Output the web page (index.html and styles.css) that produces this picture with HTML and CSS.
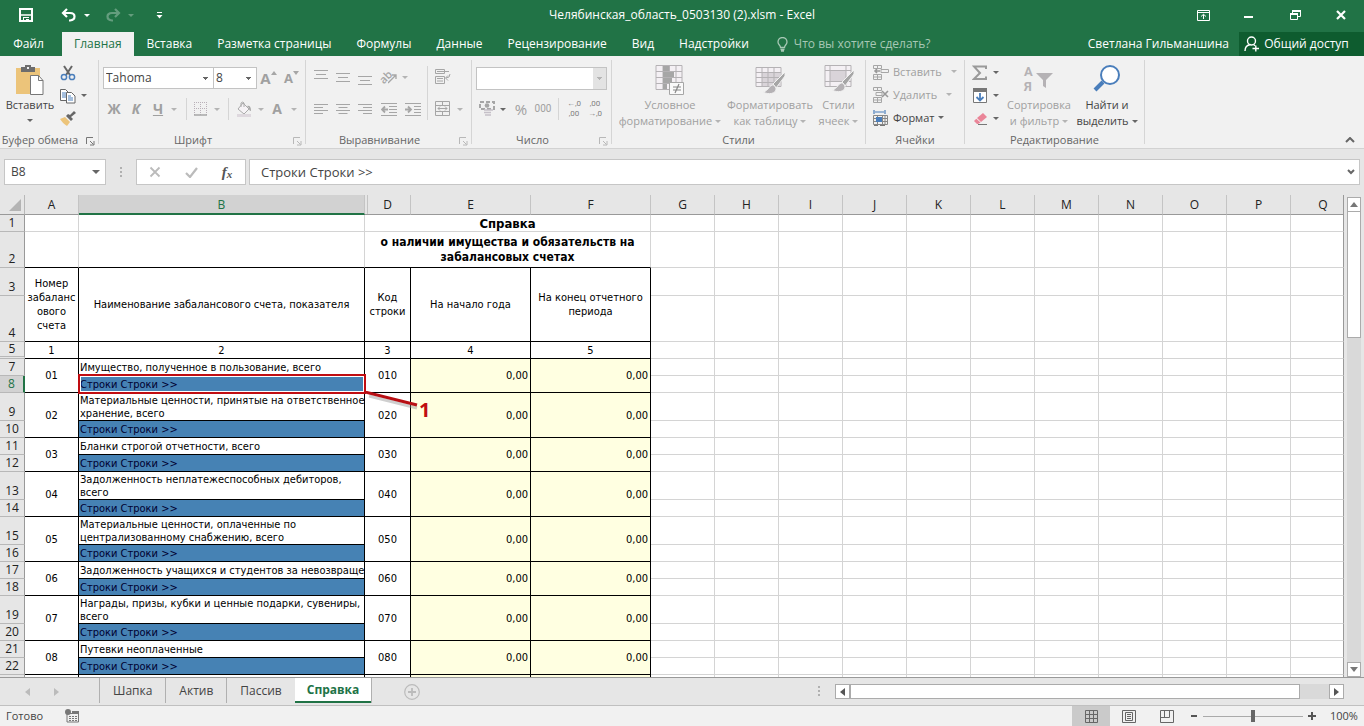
FILE: index.html
```html
<!DOCTYPE html>
<html lang="ru">
<head>
<meta charset="utf-8">
<title>Челябинская_область_0503130 (2).xlsm - Excel</title>
<link rel="stylesheet" href="styles.css">
</head>
<body>
<header class="titlebar">
  <div class="quick">
    <button class="save" aria-label="Сохранить"><svg width="14" height="14" viewBox="0 0 14 14"><path d="M1 1h12v12H1z" fill="none" stroke="#fff" stroke-width="2"/><path d="M2 7h10" stroke="#fff" stroke-width="1.500"/><path d="M4 9h6v1H4zM4 10h1v3H4zM7 11h3v2H7z" fill="#fff"/></svg></button>
    <button class="step" aria-label="Отменить"><svg width="16" height="14" viewBox="0 0 16 14"><path d="M6 1L2 5l4 4M2 5h7c6 0 6 7 0 7.500H8" fill="none" stroke="#fff" stroke-width="2.200"/></svg></button>
    <button class="drop" aria-label="Список отмены"><i class="arr white"></i></button>
    <button class="step faded" aria-label="Вернуть"><svg width="16" height="14" viewBox="0 0 16 14"><path d="M10 1l4 4-4 4M14 5H7C1 5 1 12 7 12.500h1" fill="none" stroke="#fff" stroke-width="2.200"/></svg></button>
    <button class="drop faded" aria-label="Список возврата"><i class="arr white"></i></button>
    <button class="custom" aria-label="Настройка панели"><svg width="7" height="7" viewBox="0 0 7 7"><path d="M1 0h5v1H1zM.5 3h6l-3 3.500z" fill="#fff"/></svg></button>
  </div>
  <div class="doc-title">Челябинская_область_0503130 (2).xlsm - Excel</div>
  <div class="window-buttons">
    <button aria-label="Параметры ленты"><svg width="13" height="11" viewBox="0 0 13 11"><path d="M.5.5h12v10H.5zM.5 2.500h12M6.500 9V4.500M4 6.500l2.500-2.200L9 6.500" fill="none" stroke="#fff"/></svg></button>
    <button aria-label="Свернуть"><svg width="10" height="11" viewBox="0 0 10 11"><path d="M0 6h9v2H0z" fill="#fff"/></svg></button>
    <button aria-label="Восстановить"><svg width="11" height="10" viewBox="0 0 11 10"><path d="M.5 3.500h7v6h-7zM2.500 3V.5h8v6H8" fill="none" stroke="#fff"/><path d="M2 0h9v2H2zM0 3h8v2H0z" fill="#fff"/></svg></button>
    <button aria-label="Закрыть"><svg width="10" height="10" viewBox="0 0 10 10"><path d="M1 1l8 8M9 1L1 9" stroke="#fff" stroke-width="2.200"/></svg></button>
  </div>
</header>
<nav class="tabs">
  <button class="file">Файл</button>
  <button class="active">Главная</button>
  <button>Вставка</button>
  <button>Разметка страницы</button>
  <button>Формулы</button>
  <button>Данные</button>
  <button>Рецензирование</button>
  <button>Вид</button>
  <button>Надстройки</button>
  <button class="tell"><svg width="11" height="15" viewBox="0 0 11 15"><path d="M3.500 10.500C3.500 8 1 8 1 5a4.500 4.500 0 0 1 9 0c0 3-2.500 3-2.500 5.500zM3.500 12.500h4M4 14h3" fill="none" stroke="#a7c8b5" stroke-width="1.300"/></svg>Что вы хотите сделать?</button>
  <span class="spacer"></span>
  <button class="user">Светлана Гильманшина</button>
  <button class="share"><svg width="16" height="16" viewBox="0 0 16 16"><circle cx="7.500" cy="5" r="4" fill="none" stroke="#fff" stroke-width="1.400"/><path d="M1 15c0-4 2.500-6 5.500-6.500M9.500 8.500l1.500 1.200M8.500 12.500H15M11.800 9.500v6" fill="none" stroke="#fff" stroke-width="1.400"/></svg>Общий доступ</button>
</nav>
<section class="ribbon">
  <div class="group g-clip">
    <div class="body">
      <button class="big paste"><svg width="30" height="32" viewBox="0 0 30 32"><path d="M1 4h24v26H1z" fill="#ecc47a"/><path d="M6 3h4V1h6v2h4v5H6z" fill="#6d6d6d"/><path d="M12 3h2v2h-2z" fill="#f1f1f1"/><path d="M15.500 11.500h8l4.500 5v14H15.500z" fill="#fff" stroke="#777"/><path d="M23.500 11.500v5H28" fill="none" stroke="#777"/></svg><span>Вставить</span><i class="arr dark"></i></button>
      <div class="stack clip-tools">
        <button aria-label="Вырезать"><svg width="16" height="16" viewBox="0 0 16 16"><path d="M4 1l6 9M12 1L6 10" stroke="#666" stroke-width="2"/><g fill="none" stroke="#4a7ebb" stroke-width="1.500"><circle cx="4" cy="12" r="2.600"/><circle cx="12" cy="12" r="2.600"/></g></svg></button>
        <button aria-label="Копировать"><svg width="16" height="16" viewBox="0 0 16 16"><path d="M.5 1.500h5l3 3v8h-8z" fill="#fff" stroke="#666"/><path d="M2 5h4M2 7h4M2 9h4" stroke="#4a7ebb"/><path d="M6.500 4.500h5l3.500 3.500v7H6.500z" fill="#fff" stroke="#666"/><path d="M8 8h3M8 10h5M8 12h5" stroke="#4a7ebb"/></svg></button><button aria-label="Список копирования"><i class="arr dark"></i></button>
        <button aria-label="Формат по образцу"><svg width="16" height="16" viewBox="0 0 16 16"><path d="M0 8l5-2 5 5-3 4C4 13 2 11 0 8z" fill="#ecc47a"/><path d="M6 5l5 5 2-2-2-2 5-4-2-2-4 4-2-1z" fill="#666"/></svg></button>
      </div>
    </div>
    <div class="caption">Буфер обмена<svg class="launch" width="9" height="9"><use href="#launcher"/></svg></div>
  </div>
  <div class="group g-font">
    <div class="body rows">
      <div class="font-pick">
        <select aria-label="Шрифт"><option>Tahoma</option></select>
        <select aria-label="Размер"><option>8</option></select>
        <button class="grow off" aria-label="Увеличить размер"><b>A</b><svg width="6" height="4"><path d="M0 4l3-4 3 4z" fill="#a6a6a6"/></svg></button>
        <button class="shrink off" aria-label="Уменьшить размер"><b>A</b><svg width="6" height="4"><path d="M0 0l3 4 3-4z" fill="#a6a6a6"/></svg></button>
      </div>
      <div class="font-style off">
        <button><b>Ж</b></button><button><b><em>К</em></b></button><button><b><u>Ч</u></b></button><button aria-label="Подчёркивание"><i class="arr"></i></button>
        <i class="sep"></i>
        <button aria-label="Границы"><svg width="14" height="14" viewBox="0 0 14 14"><path d="M.5 0v13M6.500 0v13M12.500 0v13M0 .5h13M0 6.500h13" stroke="#b9b0b8" stroke-dasharray="1 1"/><path d="M0 13h13" stroke="#a6a6a6" stroke-width="1.500"/></svg></button><button aria-label="Виды границ"><i class="arr"></i></button>
        <i class="sep"></i>
        <button aria-label="Заливка"><svg width="17" height="17" viewBox="0 0 17 17"><path d="M7 2l6 6-5 5-6-5z" fill="#f6f3f6" stroke="#aaa"/><path d="M5 6V2q2-2 3 0v4" fill="none" stroke="#aaa"/><path d="M11 5q4-1 4 5-2 0-2-3z" fill="#a6a6a6"/><path d="M1 13h14v3H1z" fill="#ded8de"/></svg></button><button aria-label="Цвета заливки"><i class="arr"></i></button>
        <button><b>A</b></button><button aria-label="Цвета шрифта"><i class="arr"></i></button>
      </div>
    </div>
    <div class="caption">Шрифт<svg class="launch pale" width="9" height="9"><use href="#launcher"/></svg></div>
  </div>
  <div class="group g-align">
    <div class="body">
      <div class="rows">
        <div class="align-row">
          <button aria-label="По верхнему краю"><svg width="14" height="16"><path d="M0 1.500h14M2 5.500h10M0 9.500h14" stroke="#a6a6a6"/></svg></button>
          <button aria-label="По середине"><svg width="14" height="16"><path d="M0 4.500h14M2 8.500h10M0 12.500h14" stroke="#a6a6a6"/></svg></button>
          <button aria-label="По нижнему краю"><svg width="14" height="16"><path d="M0 7.500h14M2 11.500h10M0 15.500h14" stroke="#a6a6a6"/></svg></button>
          <button class="orient" aria-label="Ориентация"><span>ab</span><svg width="9" height="11" viewBox="0 0 9 11"><path d="M0 10l8-8M4 2h4v4" fill="none" stroke="#a6a6a6" stroke-width="1.300"/></svg></button>
          <button aria-label="Варианты ориентации"><i class="arr"></i></button>
        </div>
        <div class="align-row">
          <button aria-label="По левому краю"><svg width="14" height="11"><path d="M0 .5h14M0 3.500h9M0 6.500h14M0 9.500h9" stroke="#a6a6a6"/></svg></button>
          <button aria-label="По центру"><svg width="14" height="11"><path d="M0 .5h14M2.500 3.500h9M0 6.500h14M2.500 9.500h9" stroke="#a6a6a6"/></svg></button>
          <button aria-label="По правому краю"><svg width="14" height="11"><path d="M0 .5h14M5 3.500h9M0 6.500h14M5 9.500h9" stroke="#a6a6a6"/></svg></button>
          <button aria-label="Уменьшить отступ"><svg width="16" height="13"><path d="M0 .5h16M8 3.500h8M8 6.500h8M8 9.500h8M0 12.500h16" stroke="#a6a6a6"/><path d="M7 6.500H1M4 3.500l-3 3 3 3" fill="none" stroke="#a6a6a6" stroke-width="1.800"/></svg></button>
          <button aria-label="Увеличить отступ"><svg width="16" height="13"><path d="M0 .5h16M9 3.500h7M9 6.500h7M9 9.500h7M0 12.500h16" stroke="#a6a6a6"/><path d="M0 6.500h6M3 3.500l3 3-3 3" fill="none" stroke="#a6a6a6" stroke-width="1.800"/></svg></button>
        </div>
      </div>
      <i class="sep tall"></i>
      <div class="rows">
        <div class="merge-row"><button aria-label="Перенести текст"><svg width="16" height="16" viewBox="0 0 16 16"><path d="M.5.5h9v4h-9zM.5 7.500h9v7h-9zM2 2.500h12M2 9.500h6M2 12h6M15 5q0 4-4 4M13 6.500l-2.500 2.500 2.500 2.500" fill="none" stroke="#a6a6a6"/></svg></button></div>
        <div class="merge-row"><button aria-label="Объединить"><svg width="16" height="16" viewBox="0 0 16 16"><path d="M.5.500h14v14H.5zM.5 4.500h14M.5 10.500h14M7.500.500v4M7.500 10.500v4M3 7.500h9M5 5.500l-2 2 2 2M10 5.500l2 2-2 2" fill="none" stroke="#a6a6a6"/></svg></button><button aria-label="Варианты объединения"><i class="arr"></i></button></div>
      </div>
    </div>
    <div class="caption">Выравнивание<svg class="launch pale" width="9" height="9"><use href="#launcher"/></svg></div>
  </div>
  <div class="group g-num">
    <div class="body rows">
      <div class="num-pick"><select aria-label="Числовой формат" disabled><option></option></select></div>
      <div class="num-row off">
        <button aria-label="Денежный формат"><svg width="16" height="16" viewBox="0 0 16 16"><path d="M1 1h14v7H1z" fill="none" stroke="#a6a6a6" stroke-width="2" stroke-dasharray="4 2"/><circle cx="8" cy="4.500" r="2.300" fill="#a6a6a6"/><path d="M5 9h9M5 11.500h7M6 14h6" stroke="#c5c0c8" stroke-width="1.600"/></svg></button><button aria-label="Валюты"><i class="arr dark"></i></button>
        <button class="pct">%</button><button class="zeros">000</button>
        <i class="sep"></i>
        <button class="dec" aria-label="Увеличить разрядность"><span>←,0</span><span>,00</span></button>
        <button class="dec" aria-label="Уменьшить разрядность"><span>,00</span><span>→,0</span></button>
      </div>
    </div>
    <div class="caption">Число<svg class="launch pale" width="9" height="9"><use href="#launcher"/></svg></div>
  </div>
  <div class="group g-styles">
    <div class="body off">
      <button class="big"><svg width="30" height="32" viewBox="0 0 30 32"><path d="M1 1.500h26v24H1z" fill="#f4f0f4" stroke="#b5b2b5"/><path d="M8 1.500v24M14.500 1.500v24M21 1.500v24M1 7.500h26M1 13.500h26M1 19.500h26" stroke="#b5b2b5"/><path d="M8 2h6v5H8zM8 8h11v5H8zM8 14h9v5H8zM8 20h4v5H8z" fill="#a6a6a6"/><path d="M14.500 18.500h14v12h-14z" fill="#fafafa" stroke="#a6a6a6"/><path d="M18 23h8M18 26h8M24 20l-4 9" stroke="#888" stroke-width="1.200"/></svg><span>Условное</span><span>форматирование<i class="arr"></i></span></button>
      <button class="big"><svg width="30" height="32" viewBox="0 0 30 32"><path d="M1 3.500h25v19H1z" fill="#f4f0f4" stroke="#b5b2b5"/><path d="M7 8h18v14H7z" fill="#d9d4d9"/><path d="M7 3.500v19M13 3.500v19M19 3.500v19M1 8.500h25M1 13.500h25M1 18.500h25" stroke="#b5b2b5"/><use href="#brush"/></svg><span>Форматировать</span><span>как таблицу<i class="arr"></i></span></button>
      <button class="big"><svg width="30" height="32" viewBox="0 0 30 32"><path d="M1 1.500h26v21H1z" fill="#f4f0f4" stroke="#b5b2b5"/><path d="M6 6.500h16v11H6z" fill="#d9d4d9"/><path d="M6 1.500v21M22 1.500v21M1 6.500h26M1 17.500h26" stroke="#b5b2b5"/><use href="#brush" y="-2"/></svg><span>Стили</span><span>ячеек<i class="arr"></i></span></button>
    </div>
    <div class="caption">Стили</div>
  </div>
  <div class="group g-cells">
    <div class="body lines">
      <button class="off"><svg width="16" height="16" viewBox="0 0 16 16"><path d="M.5 1.500h8v3h-8zM4.500 1.500v3M.5 10.500h8v5h-8zM4.500 10.500v5M.5 13h8M8 5.500h7.500v3H8z" fill="none" stroke="#a6a6a6"/><path d="M7 7H2M4 5L2 7l2 2" fill="none" stroke="#999" stroke-width="1.600"/></svg>Вставить<i class="arr"></i></button>
      <button class="off"><svg width="16" height="16" viewBox="0 0 16 16"><path d="M.5.5h8v3h-8zM4.500.5v3M3 5.500h6v3H3zM.5 10.500h8v5h-8zM4.500 10.500v5M.5 13h8" fill="none" stroke="#a6a6a6"/><path d="M9 4l6 6M15 4l-6 6" stroke="#999" stroke-width="1.600"/></svg>Удалить<i class="arr"></i></button>
      <button><svg width="16" height="16" viewBox="0 0 16 16"><path d="M1 0v4M12 0v4M2 2h9" stroke="#4a7ebb" stroke-width="1.200"/><path d="M.5 5.500h14v9H.5zM.5 8.500h14M.5 11.500h14M4.500 5.500v9M9.500 5.500v9M12 5.500v9" fill="none" stroke="#888"/><path d="M3 7h6v5H3z" fill="#4a7ebb"/><path d="M1 15.500h4M7 15.500h5" stroke="#777"/></svg>Формат<i class="arr dark"></i></button>
    </div>
    <div class="caption">Ячейки</div>
  </div>
  <div class="group g-edit">
    <div class="body">
      <div class="stack wide">
        <button aria-label="Сумма"><svg width="16" height="16" viewBox="0 0 16 16"><path d="M14 4V1.500H2L8 8l-6 6h12v-2.500" fill="none" stroke="#9a9a9a" stroke-width="2"/></svg></button><button aria-label="Функции"><i class="arr dark"></i></button>
        <button aria-label="Заполнить"><svg width="14" height="16" viewBox="0 0 14 16"><path d="M.5.5h13v14H.5z" fill="#fff" stroke="#777"/><path d="M0 0h14v4H0z" fill="#777"/><path d="M7 5v7M3.500 9L7 12.500 10.500 9" fill="none" stroke="#4a7ebb" stroke-width="1.800"/></svg></button><button aria-label="Варианты заполнения"><i class="arr dark"></i></button>
        <button aria-label="Очистить"><svg width="15" height="14" viewBox="0 0 15 14"><path d="M4 6l6-5 4 4-6 5z" fill="#ea8598"/><path d="M3.300 6.700L1 9l3 3h1l2.500-1.500z" fill="#ea8598"/><path d="M5 12.500h9" stroke="#777"/></svg></button><button aria-label="Варианты очистки"><i class="arr dark"></i></button>
      </div>
      <button class="big off sort"><svg width="30" height="32" viewBox="0 0 30 32"><path d="M12 9h17l-7 7v8l-3-2v-6z" fill="#b5b2b5"/><text x="0" y="12">А</text><text x="0" y="27">Я</text></svg><span>Сортировка</span><span>и фильтр<i class="arr"></i></span></button>
      <button class="big"><svg width="30" height="32" viewBox="0 0 30 32"><circle cx="18" cy="11" r="9" fill="#fff" stroke="#4a7ebb" stroke-width="2"/><path d="M11 18l-8 8" stroke="#4a7ebb" stroke-width="4"/></svg><span>Найти и</span><span>выделить<i class="arr dark"></i></span></button>
    </div>
    <div class="caption">Редактирование</div>
  </div>
  <button class="collapse" aria-label="Свернуть ленту"><svg width="10" height="6"><path d="M1 5l4-4 4 4" fill="none" stroke="#666" stroke-width="2"/></svg></button>
</section>
<section class="formula-bar">
  <div class="name-box"><input aria-label="Имя" value="B8"><i class="arr dark big-arr"></i></div>
  <i class="dots"></i>
  <div class="fx-box">
    <button aria-label="Отмена"><svg width="12" height="12"><path d="M1.500 1.500l9 9M10.500 1.500l-9 9" stroke="#bbb" stroke-width="1.800"/></svg></button>
    <button aria-label="Ввод"><svg width="13" height="11"><path d="M1 6l4 4 7-9" fill="none" stroke="#bbb" stroke-width="2.200"/></svg></button>
    <button class="fx">f<small>x</small></button>
  </div>
  <div class="formula"><input aria-label="Строка формул" value="Строки Строки &gt;&gt;"><svg width="8" height="6"><path d="M1 1l3 3 3-3" fill="none" stroke="#666" stroke-width="2"/></svg></div>
</section>
<main class="workspace">
  <div class="sheet">
    <table>
      <colgroup><col class="c-row"><col class="c-a"><col class="c-b"><col class="c-d"><col class="c-e"><col class="c-e"><col class="c-g"><col class="c-g"><col class="c-g"><col class="c-g"><col class="c-g"><col class="c-g"><col class="c-g"><col class="c-g"><col class="c-g"><col class="c-g"><col></colgroup>
      <thead><tr><th class="corner"><svg width="12" height="12"><path d="M12 0v12H0z" fill="#b4b4b4"/></svg></th><th>A</th><th class="sel">B</th><th class="after-hidden">D</th><th>E</th><th>F</th><th>G</th><th>H</th><th>I</th><th>J</th><th>K</th><th>L</th><th>M</th><th>N</th><th>O</th><th>P</th><th class="last">Q</th></tr></thead>
      <tbody class="head">
        <tr class="h17"><th>1</th><td></td><td></td><td colspan="3" class="title">Справка</td><td colspan="11" class="rest"></td></tr>
        <tr class="h36 under"><th>2</th><td></td><td></td><td colspan="3" class="subtitle">о наличии имущества и обязательств на забалансовых счетах</td><td colspan="11" class="rest"></td></tr>
      </tbody>
      <tbody class="data">
        <tr class="h28"><th>3</th><td rowspan="2">Номер забаланс ового счета</td><td rowspan="2">Наименование забалансового счета, показателя</td><td rowspan="2">Код строки</td><td rowspan="2">На начало года</td><td rowspan="2">На конец отчетного периода</td><td colspan="11" class="rest"></td></tr>
        <tr class="h46"><th>4</th><td colspan="11" class="rest"></td></tr>
        <tr class="h17"><th class="hidden-after">5</th><td>1</td><td>2</td><td>3</td><td>4</td><td>5</td><td colspan="11" class="rest"></td></tr>
        <tr class="h17"><th>7</th><td rowspan="2">01</td><td class="name">Имущество, полученное в пользование, всего</td><td rowspan="2">010</td><td rowspan="2" class="val">0,00</td><td rowspan="2" class="val">0,00</td><td colspan="11" class="rest"></td></tr>
        <tr class="h17"><th class="sel">8</th><td class="link current">Строки Строки &gt;&gt;<span class="frame"></span><svg class="pointer" width="60" height="24"><path d="M4 5l48 12" stroke="#888" stroke-opacity=".4" stroke-width="3"/><path d="M0 1l52 13" stroke="#b80f14" stroke-width="3"/></svg><b class="mark">1</b></td><td colspan="11" class="rest"></td></tr>
        <tr class="h28"><th>9</th><td rowspan="2">02</td><td class="name">Материальные ценности, принятые на ответственное<br>хранение, всего</td><td rowspan="2">020</td><td rowspan="2" class="val">0,00</td><td rowspan="2" class="val">0,00</td><td colspan="11" class="rest"></td></tr>
        <tr class="h17"><th>10</th><td class="link">Строки Строки &gt;&gt;</td><td colspan="11" class="rest"></td></tr>
        <tr class="h17"><th>11</th><td rowspan="2">03</td><td class="name">Бланки строгой отчетности, всего</td><td rowspan="2">030</td><td rowspan="2" class="val">0,00</td><td rowspan="2" class="val">0,00</td><td colspan="11" class="rest"></td></tr>
        <tr class="h17"><th>12</th><td class="link">Строки Строки &gt;&gt;</td><td colspan="11" class="rest"></td></tr>
        <tr class="h28"><th>13</th><td rowspan="2">04</td><td class="name">Задолженность неплатежеспособных дебиторов,<br>всего</td><td rowspan="2">040</td><td rowspan="2" class="val">0,00</td><td rowspan="2" class="val">0,00</td><td colspan="11" class="rest"></td></tr>
        <tr class="h17"><th>14</th><td class="link">Строки Строки &gt;&gt;</td><td colspan="11" class="rest"></td></tr>
        <tr class="h28"><th>15</th><td rowspan="2">05</td><td class="name">Материальные ценности, оплаченные по<br>централизованному снабжению, всего</td><td rowspan="2">050</td><td rowspan="2" class="val">0,00</td><td rowspan="2" class="val">0,00</td><td colspan="11" class="rest"></td></tr>
        <tr class="h17"><th>16</th><td class="link">Строки Строки &gt;&gt;</td><td colspan="11" class="rest"></td></tr>
        <tr class="h17"><th>17</th><td rowspan="2">06</td><td class="name">Задолженность учащихся и студентов за невозвращен</td><td rowspan="2">060</td><td rowspan="2" class="val">0,00</td><td rowspan="2" class="val">0,00</td><td colspan="11" class="rest"></td></tr>
        <tr class="h17"><th>18</th><td class="link">Строки Строки &gt;&gt;</td><td colspan="11" class="rest"></td></tr>
        <tr class="h28"><th>19</th><td rowspan="2">07</td><td class="name">Награды, призы, кубки и ценные подарки, сувениры,<br>всего</td><td rowspan="2">070</td><td rowspan="2" class="val">0,00</td><td rowspan="2" class="val">0,00</td><td colspan="11" class="rest"></td></tr>
        <tr class="h17"><th>20</th><td class="link">Строки Строки &gt;&gt;</td><td colspan="11" class="rest"></td></tr>
        <tr class="h17"><th>21</th><td rowspan="2">08</td><td class="name">Путевки неоплаченные</td><td rowspan="2">080</td><td rowspan="2" class="val">0,00</td><td rowspan="2" class="val">0,00</td><td colspan="11" class="rest"></td></tr>
        <tr class="h17"><th>22</th><td class="link">Строки Строки &gt;&gt;</td><td colspan="11" class="rest"></td></tr>
        <tr class="h17"><th></th><td></td><td></td><td></td><td class="val"></td><td class="val"></td><td colspan="11" class="rest"></td></tr>
      </tbody>
    </table>
  </div>
  <div class="vscroll">
    <button aria-label="Вверх"><svg width="8" height="5"><path d="M0 5l4-5 4 5z" fill="#777"/></svg></button>
    <div class="track"><div class="thumb"></div></div>
    <button aria-label="Вниз"><svg width="8" height="5"><path d="M0 0l4 5 4-5z" fill="#777"/></svg></button>
  </div>
</main>
<footer class="sheet-tabs">
  <div class="nav"><button aria-label="Предыдущий лист"><svg width="5" height="8"><path d="M5 0L0 4l5 4z" fill="#bbb"/></svg></button><button aria-label="Следующий лист"><svg width="5" height="8"><path d="M0 0l5 4-5 4z" fill="#bbb"/></svg></button></div>
  <button class="tab">Шапка</button><button class="tab">Актив</button><button class="tab">Пассив</button><button class="tab on">Справка</button>
  <button class="add" aria-label="Новый лист"><svg width="16" height="16"><circle cx="8" cy="8" r="7.300" fill="none" stroke="#bbb" stroke-width="1.200"/><path d="M4 8h8M8 4v8" stroke="#bbb" stroke-width="1.800"/></svg></button>
  <span class="spacer"></span>
  <i class="dots"></i>
  <div class="hscroll">
    <button aria-label="Влево"><svg width="5" height="8"><path d="M5 0L0 4l5 4z" fill="#555"/></svg></button>
    <div class="track"><div class="thumb"></div></div>
    <button aria-label="Вправо"><svg width="5" height="8"><path d="M0 0l5 4-5 4z" fill="#555"/></svg></button>
  </div>
</footer>
<div class="status">
  <span class="ready">Готово</span>
  <svg width="14" height="14" viewBox="0 0 14 14"><path d="M2 4.500h11.500v8.500H2z" fill="none" stroke="#777"/><path d="M7 2h7v3H7z" fill="#777"/><circle cx="3" cy="3" r="3" fill="#777"/><path d="M4 7.500h8M4 9.500h8M4 11.500h8" stroke="#777" stroke-dasharray="2 1"/></svg>
  <span class="spacer"></span>
  <button class="view on" aria-label="Обычный"><svg width="13" height="13"><path d="M.5.5h12v12H.5zM4.500.500v12M8.500.500v12M.5 4.500h12M.5 8.500h12" fill="none" stroke="#666"/></svg></button>
  <button class="view" aria-label="Разметка"><svg width="14" height="13"><path d="M.5.5h13v12H.5zM3.500 2.500h7v8h-7zM5 4.500h4M5 6.500h4M5 8.500h4" fill="none" stroke="#666"/></svg></button>
  <button class="view" aria-label="Страничный"><svg width="14" height="13"><path d="M.5.5h13v12H.5zM.5 7.500h9V.5M4.500.5v7" fill="none" stroke="#666"/></svg></button>
  <button class="zoom-btn" aria-label="Уменьшить"><svg width="8" height="8"><path d="M1 4h6" stroke="#555" stroke-width="2"/></svg></button>
  <input type="range" aria-label="Масштаб" min="0" max="100" value="50">
  <button class="zoom-btn" aria-label="Увеличить"><svg width="8" height="8"><path d="M0 4h8M4 0v8" stroke="#555" stroke-width="2"/></svg></button>
  <span class="pct-label">100%</span>
</div>
<svg class="defs" width="0" height="0"><defs>
  <g id="launcher"><path d="M.5 7V.5H7M4 4l3.500 3.500M8 4v4H4" fill="none" stroke="currentColor"/></g>
  <g id="brush"><path d="M30 8L18 20l3 4 9-12z" fill="#a6a6a6" stroke="#f1f1f1"/><path d="M19 21c-5-1-5 6-11 7 5 3 14 2 13-4z" fill="#b5b2b5" stroke="#f1f1f1"/></g>
</defs></svg>
</body>
</html>
```

FILE: styles.css
```css
* { box-sizing: border-box; }
body {
  margin: 0;
  height: 100vh;
  display: flex;
  flex-direction: column;
  overflow: hidden;
  background: #e6e6e6;
  color: #444;
  font: 12px/16px "Open Sans", "Noto Sans", sans-serif;
}
button {
  display: flex;
  align-items: center;
  justify-content: center;
  padding: 0;
  border: 0;
  background: none;
  color: inherit;
  font: inherit;
  white-space: nowrap;
}
button svg { flex: none; }
input, select { font: inherit; color: inherit; border: 0; min-width: 0; }
.spacer { flex: 1; }
.defs { position: absolute; }

.arr {
  flex: none;
  width: 0;
  border: 3px solid transparent;
  border-top-color: #b4b4b4;
  border-bottom: 0;
}
.arr.dark { border-top-color: #666; }
.arr.white { border-top-color: #fff; }
.arr.big-arr { border-width: 4px 4px 0; }
.off { color: #a0a0a0; }

/* title bar */
.titlebar {
  display: grid;
  grid-template-columns: 1fr auto 1fr;
  align-items: center;
  height: 32px;
  padding-bottom: 2px;
  background: #217346;
  color: #fff;
}
.quick { display: flex; align-items: center; padding-left: 19px; }
.quick .step { margin-left: 28px; }
.quick .drop { margin-left: 7px; }
.quick .drop + .step { margin-left: 15px; }
.quick .custom { margin-left: 22px; }
.quick .faded { opacity: .3; }
.window-buttons { display: grid; grid-template-columns: repeat(4, 46px); justify-content: end; }

/* ribbon tabs */
.tabs { display: flex; height: 24px; background: #217346; color: #fff; }
.tabs button { padding: 0 12px; }
.tabs .file { width: 62px; padding: 0 5px 0 0; }
.tabs .active { background: #f1f1f1; color: #217346; }
.tabs button + button:nth-child(n + 3) { padding: 0 12px 0 13px; }
.tabs button.tell:nth-child(n) { gap: 6px; padding-left: 16px; color: #a7c8b5; }
.tabs .user { padding: 0 10px; }
.tabs button.share:nth-child(n + 3) { gap: 4px; width: 125px; padding: 0 10px 0 0; background: #0e5c2f; }

/* ribbon */
.ribbon { display: flex; height: 93px; padding-top: 4px; background: #f1f1f1; border-bottom: 1px solid #d2d2d2; font-size: 11px; }
.group { display: flex; flex-direction: column; height: 84px; border-right: 1px solid #d5d5d5; }
.body { flex: 1; display: flex; padding-top: 1px; }
.caption { position: relative; height: 8px; line-height: 8px; text-align: center; color: #666; white-space: nowrap; padding-right: 18px; }
.launch { position: absolute; right: 3px; top: 1px; color: #777; }
.launch.pale { color: #b8b8b8; }
.g-clip { width: 99px; }
.g-font { width: 207px; }
.g-align { width: 166px; }
.g-num { width: 140px; }
.g-styles { width: 254px; }
.g-cells { width: 99px; }
.g-edit { width: 180px; }
.g-styles .caption, .g-cells .caption, .g-edit .caption { padding-right: 0; }
.rows { display: flex; flex-direction: column; }
.rows > div { height: 32px; align-items: center; }

.big { flex-direction: column; justify-content: flex-start; padding-top: 3px; }
.big span { display: flex; align-items: center; gap: 3px; height: 16px; }
.big svg { margin-bottom: 1px; overflow: visible; }
.paste { width: 60px; color: #444; }
.paste .arr { margin-top: 6px; }
.stack { display: grid; grid-template-columns: 16px 16px; grid-template-rows: repeat(3, 23px); align-items: center; height: 69px; }
.clip-tools button:nth-child(2) { grid-column: 1; }
.stack.wide { grid-template-columns: 18px 14px; padding-left: 6px; width: 40px; }

.font-pick { display: flex; padding: 2px 0 0 4px; }
.font-pick select {
  width: 111px; height: 22px; padding: 0 2px; border: 1px solid #c3c3c3; appearance: none; color: #444; font-size: 12px;
  background: linear-gradient(#666, #666) right 5px top 9px / 5px 1px no-repeat, linear-gradient(#666, #666) right 6px top 10px / 3px 1px no-repeat, linear-gradient(#666, #666) right 7px top 11px / 1px 1px no-repeat, #fff;
}
.font-pick select + select { width: 43px; border-left: 0; }
.font-pick b { font-size: 15px; line-height: 20px; }
.font-pick .shrink b { font-size: 13px; }
.font-pick button { width: 23px; align-items: center; }
.font-pick button svg { margin-bottom: 10px; }
.font-style {
  display: grid;
  grid-template-columns: 22px 22px 22px 10px 14px 16px 16px 6px 26px 8px 24px 10px;
  justify-items: center;
  padding-left: 4px;
}
.font-style b { font-size: 14px; }
.sep { width: 1px; height: 22px; background: #d5d5d5; }
.sep.tall { height: 54px; margin: 5px 7px 0 3px; }
.align-row { display: grid; grid-template-columns: 22px 22px 22px 26px 22px; padding-left: 4px; }
.align-row button:nth-child(5) .arr { margin-right: 16px; }
.orient span { transform: rotate(-45deg); font-weight: 600; color: #a6a6a6; }
.orient svg { margin: 3px 2px 0 -4px; }
.merge-row { display: grid; grid-template-columns: 16px 18px; }
.num-pick { display: flex; padding: 2px 0 0 4px; }
.num-pick select {
  width: 131px; height: 23px; border: 1px solid #c3c3c3; opacity: 1; appearance: none;
  background: linear-gradient(#b4b4b4, #b4b4b4) right 4px top 9px / 5px 1px no-repeat, linear-gradient(#b4b4b4, #b4b4b4) right 5px top 10px / 3px 1px no-repeat, linear-gradient(#b4b4b4, #b4b4b4) right 6px top 11px / 1px 1px no-repeat, linear-gradient(#e3e3e3, #e3e3e3) right / 13px 100% no-repeat, #fff;
}
.num-row { display: grid; grid-template-columns: 22px 10px 26px 18px 12px 20px 22px; justify-items: center; padding-left: 4px; }
.pct { font-size: 15px; }
.zeros { font: 10px/12px Roboto, sans-serif; }
.dec { flex-direction: column; font: 8px/10px Roboto, sans-serif; color: #808080; }

.g-styles .big:nth-child(1) { width: 116px; }
.g-styles .big:nth-child(2) { width: 84px; }
.g-styles .big:nth-child(3) { width: 53px; }
.lines { flex-direction: column; padding-left: 7px; }
.lines button { height: 23px; gap: 4px; justify-content: flex-start; color: #444; }
.lines .off { color: #a0a0a0; }
.lines .off .arr { margin-left: 5px; }
.body.lines { padding-top: 0; }
.g-edit .big { width: 68px; color: #444; }
.g-edit .sort { color: #a0a0a0; }
.g-edit text { font: bold 13px/13px Roboto, sans-serif; fill: #b5b2b5; }
.collapse { align-self: flex-end; margin: 0 9px 5px auto; }

/* formula bar */
.formula-bar { display: flex; align-items: center; height: 46px; padding: 0 4px; font-size: 13px; }
.name-box, .fx-box, .formula { display: flex; align-items: center; height: 26px; background: #fff; border: 1px solid #c6c6c6; }
.name-box { width: 102px; padding-right: 5px; }
.name-box input { flex: 1; padding: 0 6px; background: none; font-size: 12px; }
.dots { width: 2px; height: 11px; background: repeating-linear-gradient(#b0b0b0 0 2px, transparent 2px 4px); }
.formula-bar .dots { margin: 0 14px; }
.fx-box { display: grid; grid-template-columns: repeat(3, 1fr); width: 110px; margin-right: 3px; }
.fx { font: italic bold 15px/20px "Liberation Serif", serif; color: #555; }
.fx small { font-size: 11px; padding-top: 4px; }
.formula { flex: 1; padding-right: 4px; }
.formula input { flex: 1; padding: 0 11px; background: none; }

/* worksheet */
.workspace { flex: 1; min-height: 0; display: flex; border-bottom: 1px solid #999; }
.sheet { flex: 1; min-width: 0; overflow: hidden; position: relative; }
table { width: 100%; table-layout: fixed; border-collapse: separate; border-spacing: 0; background: #fff; }
.c-row { width: 25px; }
.c-a { width: 54px; }
.c-b { width: 286px; }
.c-d { width: 46px; }
.c-e { width: 120px; }
.c-g { width: 64px; }
th, td { padding: 0; }
th { background: #e6e6e6; color: #222; font-weight: 400; font-size: 12px; line-height: 16px; border-right: 1px solid #999; border-bottom: 1px solid #b8b8b8; vertical-align: bottom; }
thead th { height: 20px; border-right-color: #c4c4c4; border-bottom-color: #999; vertical-align: middle; line-height: 18px; padding-top: 1px; }
thead .corner { border-right-color: #b8b8b8; padding-right: 3px; }
thead .corner svg { display: block; margin-left: auto; }
thead .sel { background: #d2d2d2; color: #217346; border-bottom: 2px solid #217346; line-height: 17px; }
thead .after-hidden { box-shadow: inset 2px 0 #e6e6e6, inset 3px 0 #c4c4c4; }
thead .last { padding-left: 12px; border-right-color: #999; }
tbody .sel { background: #d2d2d2; color: #217346; border-right: 2px solid #217346; }
tbody .hidden-after { border-bottom: 3px double #b8b8b8; line-height: 14px; }
.h17 { height: 17px; }
.h28 { height: 28px; }
.h36 { height: 36px; }
.h46 { height: 46px; }
td { color: #000; font: 11px/14px "DejaVu Sans Condensed", "DejaVu Sans", sans-serif; border-right: 1px solid #d4d4d4; border-bottom: 1px solid #d4d4d4; text-align: center; padding-top: 1px; }
.head .title { font-size: 13px; line-height: 15px; font-weight: 700; }
.head .subtitle { font-size: 12px; line-height: 15px; font-weight: 700; }
.under td { border-bottom-color: #000; }
.data td { border-color: #000; }
.data .name, .data .link { text-align: left; padding-left: 1px; white-space: nowrap; }
.data .name { line-height: 13px; overflow: hidden; }
.data .link { background: #4682b4; color: #000030; }
.data .val { background: #ffffe1; text-align: right; padding-right: 2px; }
td.rest, .under td.rest, .data td.rest {
  border-color: #d4d4d4;
  border-right-color: #999;
  background: repeating-linear-gradient(to right, transparent 0 63px, #d4d4d4 63px 64px);
}
.data td.current { position: relative; }
.frame { position: absolute; inset: -2px -2px -2px -1px; border: 2px solid #c00d12; box-shadow: inset 0 0 0 1px #fff; }
.pointer { position: absolute; left: 286px; top: 15px; }
.mark { position: absolute; left: 340px; top: 24px; color: #c00d12; font: bold 20px/20px "Open Sans", sans-serif; }

/* scroll bars */
.vscroll { display: flex; flex-direction: column; width: 20px; padding: 2px 3px 0; }
.vscroll button { height: 15px; background: #fff; border: 1px solid #ababab; }
.vscroll .track { flex: 1; background: #d9d9d9; }
.vscroll .thumb { height: 28%; background: #fff; border: 1px solid #ababab; border-top: 0; }
.hscroll { display: flex; width: 509px; height: 15px; margin-right: 20px; }
.hscroll button { width: 15px; background: #fff; border: 1px solid #ababab; }
.hscroll .track { flex: 1; background: #d9d9d9; }
.hscroll .thumb { width: 94%; height: 15px; background: #fff; border: 1px solid #ababab; }

/* sheet tabs */
.sheet-tabs { display: flex; align-items: center; height: 27px; color: #444; }
.nav { display: flex; width: 99px; padding-left: 25px; gap: 24px; }
.tab { align-self: flex-start; height: 25px; padding: 0 13px 0 14px; box-shadow: inset 1px 0 #b0b0b0; }
.tab.on { padding: 0 12px; background: #fff; color: #217346; font-weight: 700; border-bottom: 2px solid #217346; box-shadow: 1px 0 #b0b0b0; }
.add { margin-left: 33px; }
.sheet-tabs .dots { margin-right: 15px; }

/* status bar */
.status { display: flex; align-items: center; height: 21px; background: #f1f1f1; border-top: 1px solid #c0c0c0; font-size: 11px; }
.ready { width: 65px; padding-left: 6px; }
.view { width: 38px; height: 20px; }
.view.on { background: #cacaca; }
.zoom-btn { width: 10px; }
.view + .zoom-btn { margin-left: 3px; }
.status input { width: 100px; height: 14px; margin: 0 4px; appearance: none; background: linear-gradient(#aaa, #aaa) center / 100% 1px no-repeat; }
.status input::-webkit-slider-thumb { appearance: none; width: 4px; height: 12px; background: #666; }
.pct-label { width: 47px; padding-left: 13px; }
```
